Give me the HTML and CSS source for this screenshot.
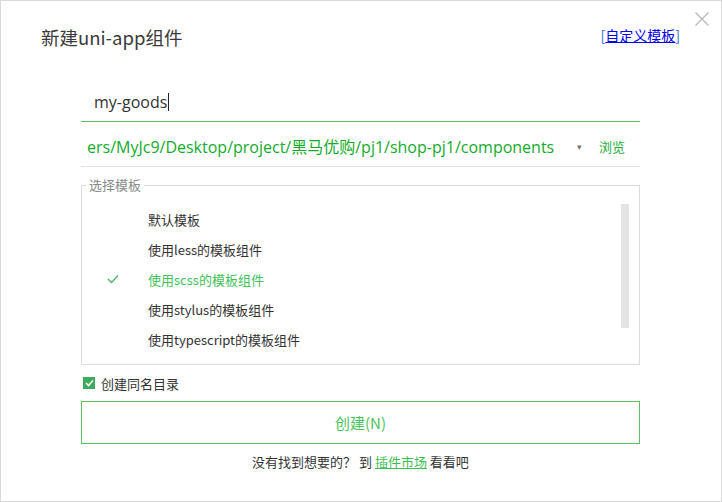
FILE: index.html
```html
<!DOCTYPE html>
<html lang="zh-CN">
<head>
<meta charset="utf-8">
<title>新建uni-app组件</title>
<link rel="stylesheet" href="styles.css">
</head>
<body>
<div class="dialog">
  <div class="close" aria-label="关闭">
    <svg width="14" height="14" viewBox="0 0 14 14"><path d="M0.5 0.5 L13.5 13.5 M13.5 0.5 L0.5 13.5" stroke="#b4b4b4" stroke-width="1.1" fill="none"/></svg>
  </div>
  <div class="header">
    <div class="title">新建uni-app组件</div>
    <div class="custom"><span class="br">[</span><a class="custom-link">自定义模板</a><span class="br">]</span></div>
  </div>
  <div class="content">
    <div class="name-row">
      <span class="name">my-goods</span><span class="caret"></span>
    </div>
    <div class="path-row">
      <div class="path"><span class="path-text">ers/MyJc9/Desktop/project/黑马优购/pj1/shop-pj1/components</span></div>
      <span class="arrow">▾</span>
      <span class="browse">浏览</span>
    </div>
    <fieldset class="templates">
      <legend class="legend">选择模板</legend>
      <div class="list">
        <div class="item"><span class="check"></span><span>默认模板</span></div>
        <div class="item"><span class="check"></span><span>使用less的模板组件</span></div>
        <div class="item selected"><span class="check">
          <svg width="12" height="10" viewBox="0 0 12 10"><path d="M1 5 L4.5 8.5 L11 1.5" stroke="#4bb365" stroke-width="1.3" fill="none"/></svg>
        </span><span>使用scss的模板组件</span></div>
        <div class="item"><span class="check"></span><span>使用stylus的模板组件</span></div>
        <div class="item"><span class="check"></span><span>使用typescript的模板组件</span></div>
      </div>
      <div class="scrollbar"></div>
    </fieldset>
    <div class="checkbox-row">
      <span class="checkbox">
        <svg width="9" height="8" viewBox="0 0 9 8"><path d="M1 4 L3.5 6.5 L8 1.5" stroke="#ffffff" stroke-width="1.6" fill="none"/></svg>
      </span>
      <span class="cb-label">创建同名目录</span>
    </div>
    <div class="create">创建(N)</div>
    <div class="footer">没有找到想要的？ 到 <a class="market">插件市场</a> 看看吧</div>
  </div>
</div>
</body>
</html>
```

FILE: styles.css
```css
* { box-sizing: border-box; }
html, body { margin: 0; padding: 0; }
body {
  font-family: "Noto Sans CJK SC", "Open Sans", sans-serif;
  color: #333;
  background: #fff;
}
.dialog {
  position: relative;
  width: 722px;
  height: 502px;
  border: 1px solid #dadada;
  background: #fff;
}
.close {
  position: absolute;
  top: 11px;
  right: 12px;
  width: 14px;
  height: 14px;
  line-height: 0;
}
.header {
  display: flex;
  justify-content: space-between;
  align-items: center;
  height: 72px;
  padding: 0 41px 0 40px;
}
.title {
  font-size: 18.5px;
  color: #3a3a3a;
  margin-top: -1px;
}
.custom {
  font-size: 14px;
  margin-top: -4px;
}
.br { color: #1a6fd8; }
.custom-link {
  color: #0000ee;
  text-decoration: underline;
}
.content {
  margin: 0 81px 0 80px;
  display: flex;
  flex-direction: column;
}
.name-row {
  height: 49px;
  display: flex;
  align-items: center;
  padding-left: 13px;
  padding-top: 9px;
  border-bottom: 1px solid #5dbd66;
}
.name {
  font-size: 16px;
  color: #333;
  font-family: "Open Sans", "Noto Sans CJK SC", sans-serif;
}
.caret {
  display: inline-block;
  width: 1px;
  height: 18px;
  background: #222;
  margin-left: 1px;
}
.path-row {
  height: 45px;
  display: flex;
  align-items: center;
  padding-top: 4px;
  border-bottom: 1px solid #e2e2e2;
}
.path {
  width: 480px;
  overflow: hidden;
  padding-left: 7px;
  white-space: nowrap;
}
.path-text {
  font-size: 16px;
  color: #14ab2c;
  font-family: "Open Sans", "Noto Sans CJK SC", sans-serif;
  display: inline-block;
  margin-left: -1px;
}
.arrow {
  width: 20px;
  font-size: 9px;
  color: #777;
  margin-left: 16px;
}
.browse {
  font-size: 13px;
  color: #20ae38;
  margin-left: 2px;
}
.templates {
  position: relative;
  margin: 11px 0 0 0;
  padding: 12px 0 0 0;
  border: 1px solid #dcdcdc;
  height: 187px;
}
.legend {
  font-size: 13px;
  color: #8a8a8a;
  padding: 0 3px;
  margin-left: 4px;
  line-height: 14px;
}
.list {
  display: flex;
  flex-direction: column;
}
.item {
  height: 30px;
  display: flex;
  align-items: center;
  font-size: 13px;
  color: #333;
}
.item .check {
  width: 66px;
  padding-left: 25px;
  line-height: 0;
}
.item.selected { color: #43c15a; }
.scrollbar {
  position: absolute;
  top: 12px;
  right: 10px;
  width: 8px;
  height: 124px;
  background: #e4e4e4;
}
.checkbox-row {
  display: flex;
  align-items: center;
  height: 20px;
  margin-top: 8px;
  padding-left: 2px;
}
.checkbox {
  width: 12px;
  height: 12px;
  background: #3eaa5c;
  display: flex;
  align-items: center;
  justify-content: center;
}
.cb-label {
  font-size: 13px;
  margin-left: 6px;
  color: #333;
}
.create {
  margin-top: 8px;
  height: 43px;
  border: 1px solid #5cc065;
  display: flex;
  align-items: center;
  justify-content: center;
  font-size: 15px;
  color: #4cc35d;
}
.footer {
  margin-top: 8px;
  text-align: center;
  font-size: 13px;
  color: #333;
}
.market {
  color: #3fbf55;
  text-decoration: underline;
}
```
